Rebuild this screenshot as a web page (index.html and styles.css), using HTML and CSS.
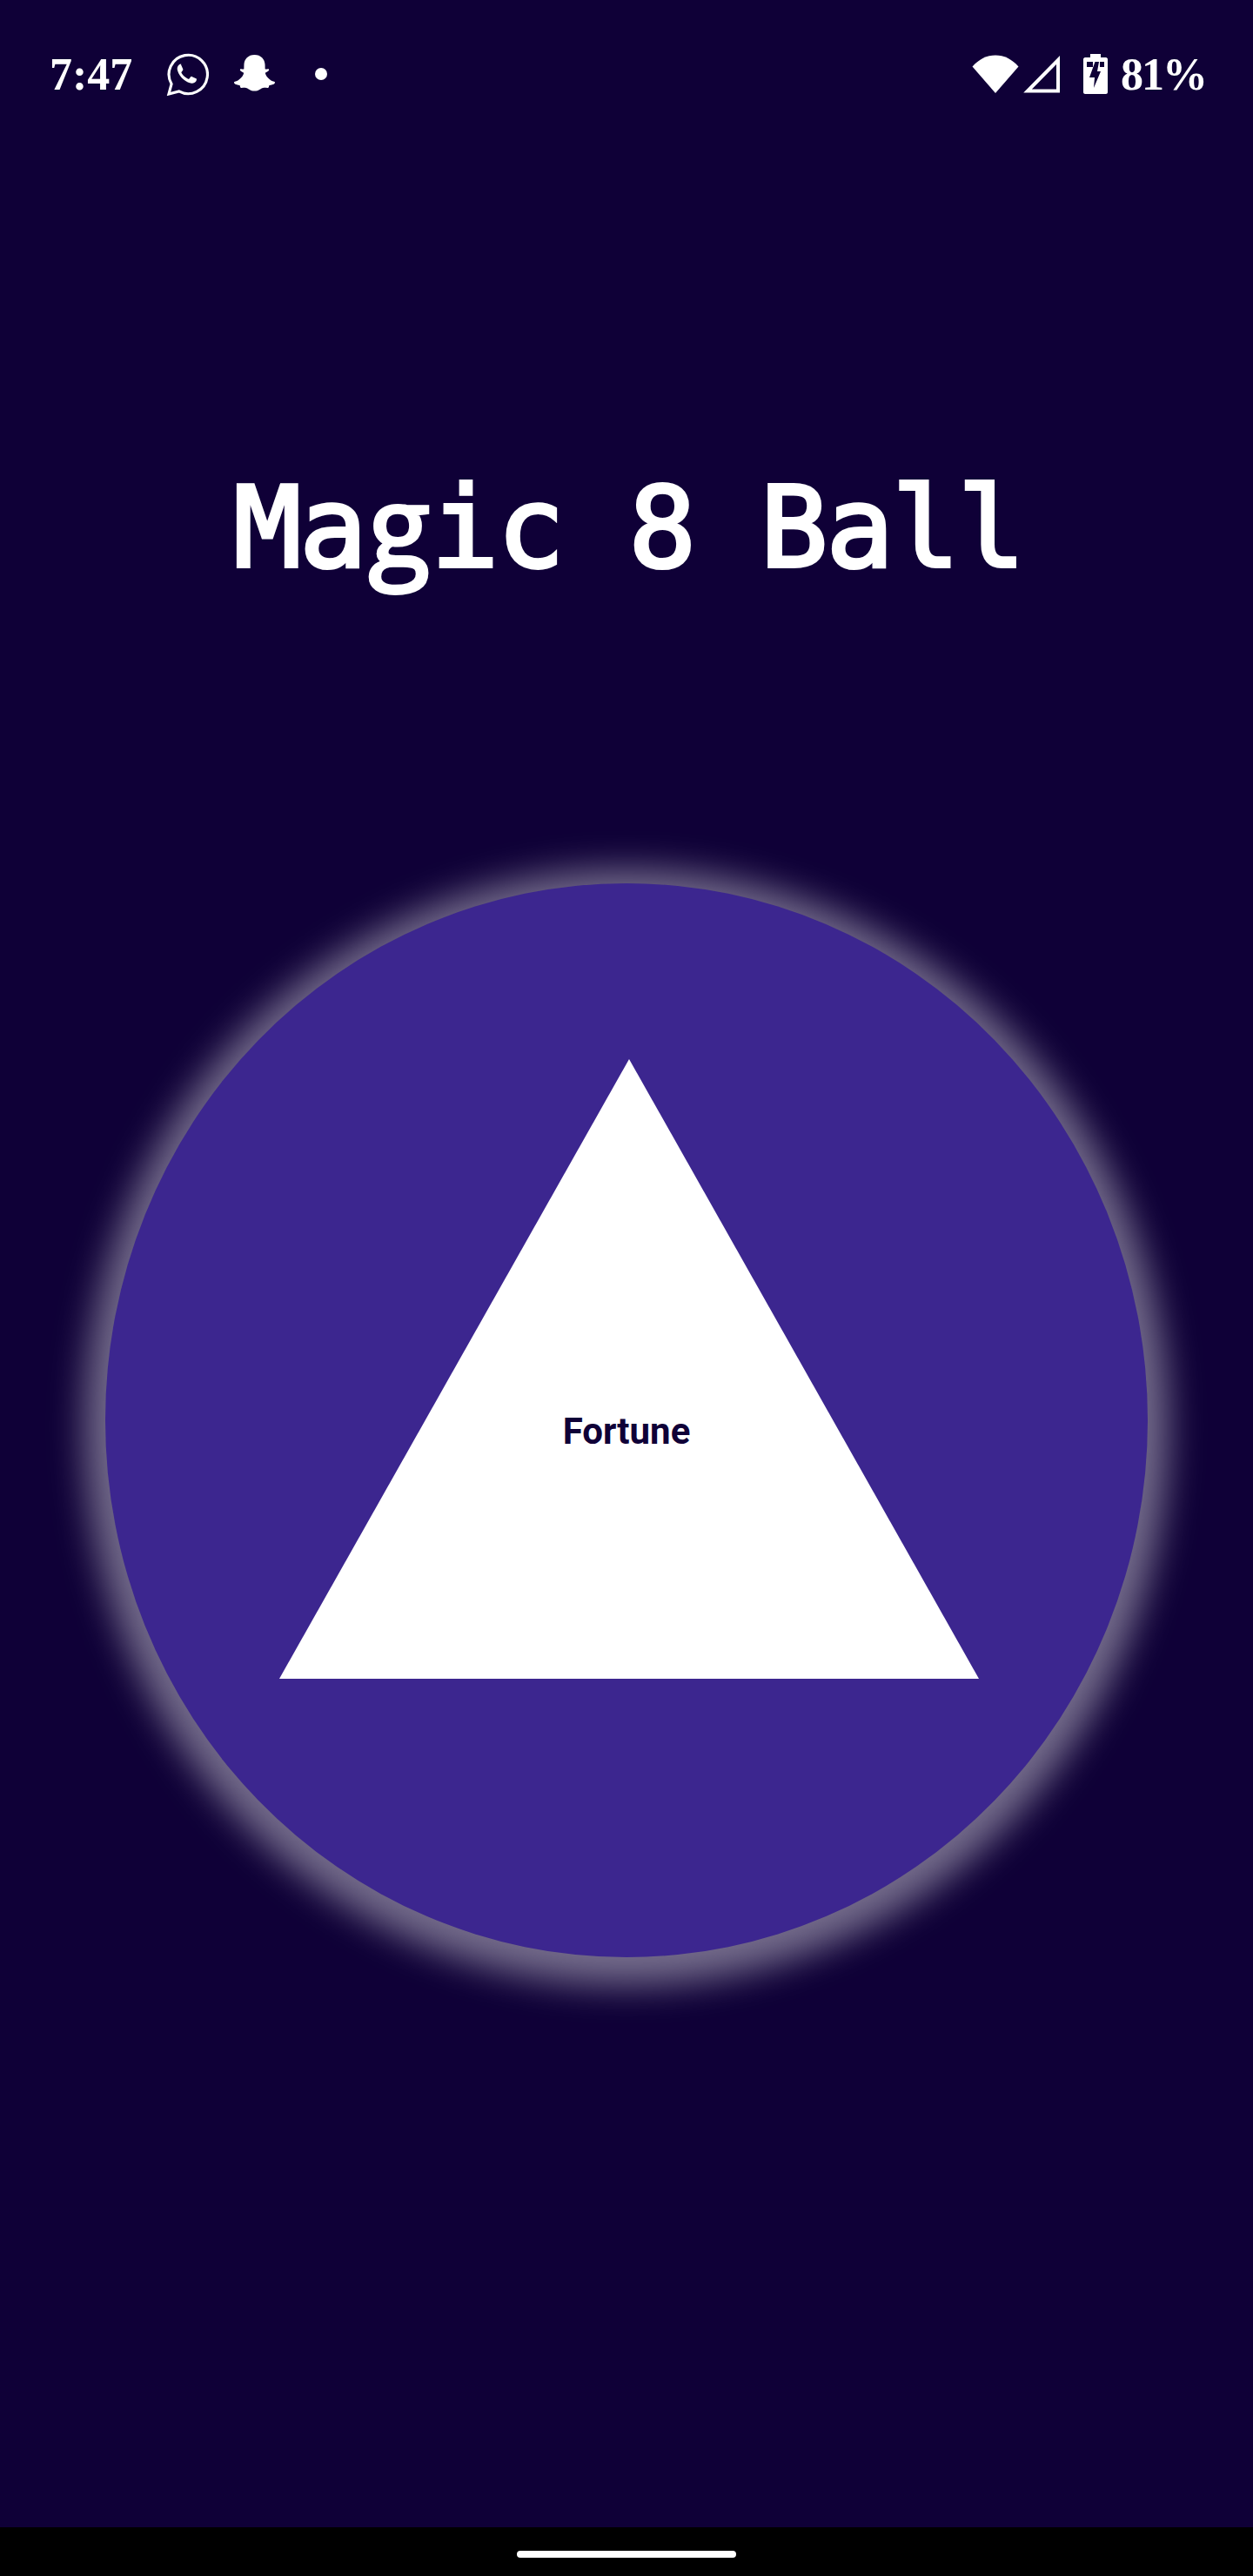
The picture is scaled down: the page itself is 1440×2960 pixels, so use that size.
FILE: index.html
```html
<!DOCTYPE html>
<html lang="en">
<head>
<meta charset="UTF-8">
<title>Magic 8 Ball</title>
<link rel="stylesheet" href="styles.css">
</head>
<body>
<div class="screen">
    <div class="status-bar">
        <div class="status-left">
            <span class="status-text time">7:47</span>
            <svg class="icon-whatsapp" viewBox="0 0 50 50" width="49" height="49">
                <path d="M3 48l3.200-11.800A22.600 22.600 0 1 1 15 44.800z" fill="none" stroke="#fff" stroke-width="3.200" stroke-linejoin="miter"/>
                <path d="M18 13c-1-.3-2-.1-3 .8-1.800 1.700-2.400 3.800-1.800 6.300 1.300 4.500 3.900 8.300 7.700 11.200 3 2.300 5.900 3.800 8.900 4.100 2.200.2 4.100-.8 5.300-2.500.6-.9.7-1.900.5-2.700l-5.600-2.700c-.6-.2-1 0-1.300.4l-1.700 2.100c-.4.400-.8.500-1.300.3-3.400-1.500-6-3.800-7.800-7-.2-.5-.2-.9.100-1.200l1.500-1.900c.3-.4.300-.8.200-1.200l-2.200-5.300c-.2-.4-.4-.6-.5-.7z" fill="#fff"/>
            </svg>
            <svg class="icon-snap" viewBox="0 0 50 48" width="49" height="47">
                <path d="M25 1c7.500 0 12 5 12.300 11.500l.1 5.200c1.200.7 3.400-.6 4.300.2 1 1-.2 2.300-1.900 3-1.300.5-2.400 1-2 2.400 1 3.300 5.300 8.200 10.200 9.200 1 .2 1.300 1.100.7 1.900-1.200 1.500-4.300 2-6.300 2.400-.6.900-.5 2.700-1.500 3-1.600.3-3.500-.5-5.800 0-3 .6-5.200 3.700-10.100 3.700s-7.100-3.100-10.100-3.700c-2.300-.5-4.200.3-5.800 0-1-.3-.9-2.100-1.500-3-2-.4-5.100-.9-6.300-2.400-.6-.8-.3-1.700.7-1.900 4.900-1 9.200-5.900 10.200-9.200.4-1.400-.7-1.900-2-2.400-1.700-.7-2.900-2-1.900-3 .9-.8 3.100.5 4.300-.2l.1-5.200C13 6 17.500 1 25 1z" fill="#fff"/>
            </svg>
            <span class="notif-dot"></span>
        </div>
        <div class="status-right">
            <svg class="icon-wifi" viewBox="0 0 54 46" width="54" height="46">
                <path d="M0.500 14.500C15 -3 39 -3 53.500 14.500L27 45z" fill="#fff"/>
            </svg>
            <svg class="icon-signal" viewBox="0 0 44 44" width="44" height="44">
                <path d="M40 6V41.500H5z" fill="none" stroke="#fff" stroke-width="4"/>
            </svg>
            <svg class="icon-battery" viewBox="0 0 28 46" width="28" height="46">
                <path d="M8 0h12v4h6c1 0 2 1 2 2v38c0 1-1 2-2 2H2c-1 0-2-1-2-2V6c0-1 1-2 2-2h6z" fill="#fff"/>
                <path d="M4 9h7v6H4zM19 9h5v6h-5zM13.500 9H18l-2 11h4L12 39l1-12H7z" fill="#0f0037"/>
            </svg>
            <span class="status-text battery-pct">81%</span>
        </div>
    </div>

    <main class="content">
        <h1 class="title">Ma<span class="title-g">g</span>ic 8 Ball</h1>
        <div class="ball">
            <svg class="triangle" viewBox="0 0 804 712" width="804" height="712">
                <polygon points="402,0 804,712 0,712" fill="#fff"/>
            </svg>
            <span class="fortune">Fortune</span>
        </div>
    </main>

    <div class="nav-bar">
        <span class="home-pill"></span>
    </div>
</div>
</body>
</html>
```

FILE: styles.css
```css
* {
    box-sizing: border-box;
}
html, body {
    margin: 0;
    padding: 0;
}
body {
    background-color: #0f0037;
    font-family: "Roboto", sans-serif;
}
.screen {
    width: 1440px;
    height: 2960px;
    display: flex;
    flex-direction: column;
    overflow: hidden;
}
.status-bar {
    height: 170px;
    padding: 60px 54px 0 57px;
    display: flex;
    justify-content: space-between;
    align-items: flex-start;
    flex-shrink: 0;
}
.status-left, .status-right {
    display: flex;
    align-items: center;
    height: 50px;
}
.status-text {
    font-family: "Liberation Serif", serif;
    font-weight: bold;
    font-size: 52px;
    color: #fff;
}
.icon-whatsapp {
    margin-left: 39px;
}
.icon-snap {
    margin-left: 28px;
}
.notif-dot {
    width: 14px;
    height: 14px;
    border-radius: 50%;
    background-color: #fff;
    margin-left: 45px;
}
.icon-signal {
    margin-left: 5px;
}
.icon-battery {
    margin-left: 25px;
}
.battery-pct {
    margin-left: 15px;
    letter-spacing: -2px;
}
.content {
    flex: 1;
    display: flex;
    flex-direction: column;
    align-items: center;
}
.title {
    margin: 351px 0 0 0;
    padding-left: 5px;
    height: 170px;
    font-family: "DejaVu Sans Mono", monospace;
    font-size: 129px;
    font-weight: normal;
    letter-spacing: -2px;
    line-height: 170px;
    color: #fff;
    -webkit-text-stroke: 4px #fff;
}
.title-g {
    font-family: "Open Sans", sans-serif;
    display: inline-block;
    width: 75.660px;
    line-height: 1;
    text-align: center;
}
.ball {
    width: 1198px;
    height: 1234px;
    margin-top: 324px;
    border-radius: 50%;
    background-color: #3c268f;
    box-shadow: 0 8px 40px 24px rgba(255, 255, 255, 0.42);
    display: flex;
    align-items: center;
    justify-content: center;
    position: relative;
}
.triangle {
    position: absolute;
    left: 200px;
    top: 202px;
}
.fortune {
    position: relative;
    font-size: 42px;
    font-weight: bold;
    color: #0f0037;
    top: 12px;
}
.nav-bar {
    height: 56px;
    padding-top: 6px;
    background-color: #000;
    display: flex;
    align-items: center;
    justify-content: center;
    flex-shrink: 0;
}
.home-pill {
    width: 252px;
    height: 8px;
    border-radius: 4px;
    background-color: #fff;
}
```
